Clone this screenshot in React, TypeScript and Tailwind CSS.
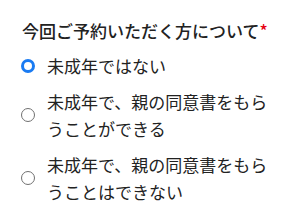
import { useState } from "react";

const options = [
  { id: "adult", label: "未成年ではない" },
  { id: "minor-consent", label: "未成年で、親の同意書をもらうことができる" },
  { id: "minor-no-consent", label: "未成年で、親の同意書をもらうことはできない" },
];

function Radio({ checked }: { checked: boolean }) {
  return checked ? (
    <span className="block h-[14px] w-[14px] shrink-0 rounded-full border-[3.5px] border-[#1a7bf2] bg-white" />
  ) : (
    <span className="block h-[14px] w-[14px] shrink-0 rounded-full border-[1.5px] border-[#707070] bg-white" />
  );
}

export default function App() {
  const [value, setValue] = useState("adult");

  return (
    <div
      className="h-[219px] w-[300px] bg-white pl-[21px] pr-[20px] pt-[17px] text-[#222222]"
      style={{ fontFamily: '"Noto Sans CJK JP", "Noto Sans", sans-serif' }}
    >
      <p className="pl-[1px] text-[17px] font-medium leading-[27px]">
        今回ご予約いただく方について<span className="text-[#e60012]">*</span>
      </p>
      <div className="mt-[8px] flex flex-col gap-[9px]">
        {options.map((o) => (
          <label
            key={o.id}
            className="flex cursor-pointer items-center gap-[12px]"
            onClick={() => setValue(o.id)}
          >
            <Radio checked={value === o.id} />
            <span className="text-[17px] leading-[27px]">{o.label}</span>
          </label>
        ))}
      </div>
    </div>
  );
}
